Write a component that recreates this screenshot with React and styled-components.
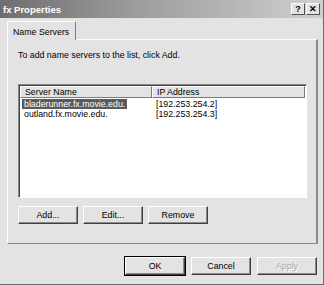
import styled, { createGlobalStyle } from "styled-components";

const GlobalStyle = createGlobalStyle`
  html, body { margin: 0; padding: 0; background: #e3e3e3; }
  * { box-sizing: border-box; }
`;

const Window = styled.div`
  width: 324px; height: 285px;
  background: #e3e3e3;
  font-family: "Liberation Sans", Arial, sans-serif;
  font-size: 8.8px; color: #000;
  border-right: 1px solid #6a6a6a;
  border-bottom: 1px solid #6a6a6a;
  display: flex; flex-direction: column;
  overflow: hidden;
`;

const TitleBar = styled.div`
  height: 18px;
  background: linear-gradient(90deg, #6e6e6e 0%, #9a9a9a 40%, #d0d0d0 100%);
  display: flex; align-items: center; justify-content: space-between;
  padding: 0 3px 0 3px;
`;

const Title = styled.span`
  color: #fff; font-weight: bold; font-size: 9.5px;
`;

const TitleButtons = styled.div`display: flex; gap: 1px;`;

const TitleBtn = styled.div`
  width: 14px; height: 12px;
  background: #e3e3e3;
  border: 1px solid; border-color: #fff #555 #555 #fff;
  display: flex; align-items: center; justify-content: center;
  font-weight: bold; font-size: 9px; line-height: 1;
`;

const Body = styled.div`
  flex: 1;
  padding: 3px 6px 0 7px;
  display: flex; flex-direction: column;
`;

const TabRow = styled.div`display: flex; height: 18px;`;

const Tab = styled.div`
  padding: 5px 6px 0 5px;
  border-top: 1px solid #fff; border-left: 1px solid #fff;
  border-right: 1px solid #7a7a7a;
  border-top-left-radius: 2px; border-top-right-radius: 2px;
  background: #e3e3e3;
  position: relative; z-index: 1; margin-bottom: -1px;
  height: 19px;
`;

const Panel = styled.div`
  height: 205px; width: 311px;
  border-top: 1px solid #fff; border-left: 1px solid #fff;
  border-right: 2px solid #8a8a8a; border-bottom: 1px solid #8a8a8a;
  padding: 10px 9px 0 10px;
  display: flex; flex-direction: column;
`;

const Intro = styled.p`margin: 0; height: 34px; line-height: 10px;`;

const ListBox = styled.div`
  width: 289px; height: 114px;
  border: 1px solid; border-color: #8a8a8a #fff #fff #8a8a8a;
  background: #fff;
  box-shadow: inset 1px 1px 0 #404040;
  padding: 1px;
`;

const HeaderRow = styled.div`display: flex; height: 12px;`;

const HeaderCell = styled.div`
  width: ${({ $w }) => $w}px;
  background: #e3e3e3;
  border: 1px solid; border-color: #fff #7a7a7a #7a7a7a #fff;
  padding: 0 0 0 4px; line-height: 10px;
`;

const Row = styled.div`
  display: flex; height: 10px; line-height: 10px;
  margin-top: ${({ $first }) => $first ? 1 : 0}px;
`;

const Cell = styled.div`
  width: ${({ $w }) => $w}px;
  padding-left: 4px;
  white-space: nowrap;
`;

const NameCell = styled.span`
  display: inline-block;
  margin-left: -2px; padding: 0 2px;
  background: ${({ $sel }) => $sel ? "#5a5a5a" : "transparent"};
  color: ${({ $sel }) => $sel ? "#fff" : "#000"};
`;

const ButtonRow = styled.div`
  display: flex; gap: 5px; margin-top: 8px;
`;

const Button = styled.div`
  width: ${({ $w }) => $w || 60}px; height: 18px;
  background: #e3e3e3;
  border: 1px solid; border-color: #fff #404040 #404040 #fff;
  box-shadow: inset -1px -1px 0 #8a8a8a;
  display: flex; align-items: center; justify-content: center;
  color: ${({ $disabled }) => $disabled ? "#a8a8a8" : "#000"};
  text-shadow: ${({ $disabled }) => $disabled ? "1px 1px 0 #fff" : "none"};
  ${({ $default }) => $default && "outline: 1px solid #000;"}
`;

const Footer = styled.div`
  display: flex; justify-content: flex-end; gap: 6px;
  padding: 13px 0 0 0;
`;

export default function App() {
  return (
    <>
      <GlobalStyle />
      <Window>
        <TitleBar>
          <Title>fx Properties</Title>
          <TitleButtons>
            <TitleBtn>?</TitleBtn>
            <TitleBtn>✕</TitleBtn>
          </TitleButtons>
        </TitleBar>
        <Body>
          <TabRow><Tab>Name Servers</Tab></TabRow>
          <Panel>
            <Intro>To add name servers to the list, click Add.</Intro>
            <ListBox>
              <HeaderRow>
                <HeaderCell $w={132}>Server Name</HeaderCell>
                <HeaderCell $w={153}>IP Address</HeaderCell>
              </HeaderRow>
              <Row $first>
                <Cell $w={132}><NameCell $sel>bladerunner.fx.movie.edu.</NameCell></Cell>
                <Cell $w={153}>[192.253.254.2]</Cell>
              </Row>
              <Row>
                <Cell $w={132}><NameCell>outland.fx.movie.edu.</NameCell></Cell>
                <Cell $w={153}>[192.253.254.3]</Cell>
              </Row>
            </ListBox>
            <ButtonRow>
              <Button>Add...</Button>
              <Button>Edit...</Button>
              <Button>Remove</Button>
            </ButtonRow>
          </Panel>
          <Footer>
            <Button $default>OK</Button>
            <Button>Cancel</Button>
            <Button $disabled>Apply</Button>
          </Footer>
        </Body>
      </Window>
    </>
  );
}
